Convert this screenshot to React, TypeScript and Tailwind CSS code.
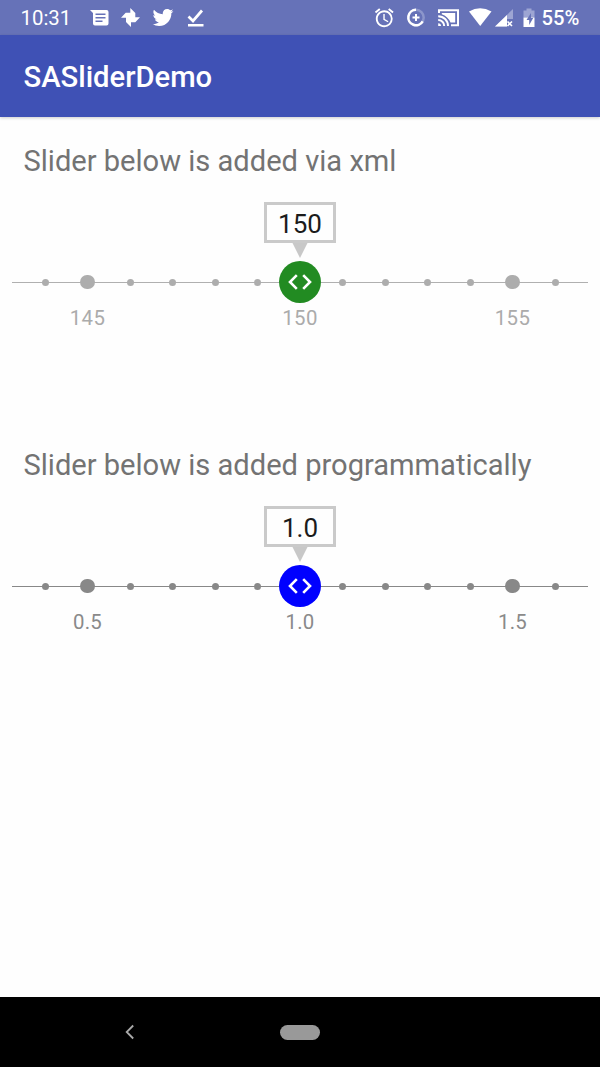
import React from 'react';
import { MdAlarm } from 'react-icons/md';
import { FaTwitter } from 'react-icons/fa';

type SliderProps = {
  title: string;
  value: string;
  labels: [string, string, string];
  knob: string;
  dot: string;
  line: string;
  text: string;
};

function Slider({ title, value, labels, knob, dot, line, text }: SliderProps) {
  return (
    <section className="flex h-[304px] flex-col items-center">
      <h2 className="h-[34px] w-full whitespace-nowrap pl-[23.5px] text-[29.080px] leading-[34px] text-[#737373]">{title}</h2>
      <div className="mt-[24px] flex h-[41px] w-[72px] items-center justify-center border-[3px] border-[#cacaca] pt-[3px] text-[26px] text-[#1b1b1b]">
        {value}
      </div>
      <svg className="h-[15px] w-[16px]" viewBox="0 0 16 15">
        <path d="M0.5 0h15L8 15z" fill="#c8c8c8" />
      </svg>
      <div className="relative mt-[2px] flex h-[44px] w-full items-center px-[12px]">
        <div className={`h-px w-full ${line}`} />
        <div className="absolute inset-0 flex items-center justify-center">
          {Array.from({ length: 13 }, (_, i) => (
            <div key={i} className="flex w-[42.5px] shrink-0 justify-center">
              {i === 6 ? (
                <div className={`flex size-[42.5px] shrink-0 items-center justify-center rounded-full ${knob}`}>
                  <svg className="h-[16px] w-[26px]" viewBox="0 0 26 16" fill="none" stroke="#fff" strokeWidth="2.6">
                    <path d="M9.8 1.2L3 8l6.8 6.8M16.2 1.200L23 8l-6.8 6.8" />
                  </svg>
                </div>
              ) : (
                <div className={`rounded-full ${dot} ${i === 1 || i === 11 ? 'size-[14.5px]' : 'size-[7px]'}`} />
              )}
            </div>
          ))}
        </div>
      </div>
      <div className={`mt-[2px] flex w-full justify-center text-[20.4px] leading-[25px] tracking-[0.3px] ${text}`}>
        {labels.map((l) => (
          <span key={l} className="w-[212.5px] shrink-0 text-center">{l}</span>
        ))}
      </div>
    </section>
  );
}

export default function App() {
  return (
    <div className="flex h-[1067px] w-[600px] flex-col overflow-hidden bg-[#fefefe] font-['Roboto',sans-serif]">
      <div className="flex h-[35px] shrink-0 items-center bg-[#6672b8] pt-[1px] text-[20.4px] font-medium text-white">
        <span className="w-[88px] pl-[20.5px] pt-[1px] font-normal">10:31</span>
        <svg className="h-[34px] w-[120px]" viewBox="88 1 120 34" fill="#fff">
          <path fillRule="evenodd" d="M90 10h16.500a2 2 0 0 1 2 2v11.500a2 2 0 0 1-2 2H95a2 2 0 0 1-2-2V13zM95.500 13.500v1.500h10v-1.500zM95.500 17v1.500h10V17zM95.500 20.500V22h7v-1.500z" />
          <path d="M130.300 8l5 5v4.500h-5zM140 17.300l-4.700 5h-5v-5zM131 27l-5-5v-4.500h5zM121 17.700l4.700-5h5v5z" />
          <FaTwitter x="152.500" y="7" size={21} />
          <path d="M188.500 16.500l4.500 4.500 9-10.500" fill="none" stroke="#fff" strokeWidth="2.7" />
          <path d="M188 24h15.500v2.500H188z" />
        </svg>
        <svg className="ml-[162px] h-[34px] w-[170px]" viewBox="370 1 170 34" fill="#fff">
          <MdAlarm x="373" y="6.500" size={22.500} />
          <circle cx="416" cy="17.500" r="7.700" fill="none" stroke="#8c96cb" strokeWidth="2.500" />
          <path d="M416 9.800A7.700 7.700 0 1 0 422.700 21.300" fill="none" stroke="#fff" strokeWidth="2.500" />
          <path d="M415 14h2v2.500h2.500v2H417V21h-2v-2.500h-2.500v-2h2.500z" />
          <g fill="none" stroke="#fff" strokeWidth="2">
            <path d="M439 13v-2.800h19v15h-7M438.200 16.200a9.800 9.800 0 0 1 9.800 9.800M438.200 20a6 6 0 0 1 6 6" />
          </g>
          <path d="M438.200 23.200a2.800 2.800 0 0 1 2.800 2.800h-2.800zM441.800 13h13.400v9.500h-4.700q-2.500-6-8.700-8.200z" />
          <path d="M469 11.500q11-6.500 22.500 0L480.200 26z" />
          <path d="M513 9v10h-6v7.500h-12z" fill="#9da5d3" />
          <path d="M507 15v11.500h-12z" />
          <path d="M507.500 21.500l4.500 4.500m0-4.500l-4.500 4.500" stroke="#fff" strokeWidth="1.600" />
          <path d="M523.500 10.500h3v-2h5v2h3v7h-11z" fill="#9da5d3" />
          <path d="M523.500 17.500h11v9.500h-11z" />
          <path d="M531 13l-4.500 7h2.700v5l4-7h-2.200z" fill="#6672b8" />
        </svg>
        <span className="ml-[1.500px] pt-[1px] text-[20.2px]">55%</span>
      </div>
      <header className="flex h-[82px] shrink-0 items-center bg-[#3f51b5] pl-[23.5px] pt-[4px] text-[29.2px] font-medium text-white shadow-[0_1px_3px_rgba(0,0,0,0.2)]">
        SASliderDemo
      </header>
      <main className="flex flex-1 flex-col pt-[27px]">
        <Slider title="Slider below is added via xml" value="150" labels={['145', '150', '155']} knob="bg-[#228b22]" dot="bg-[#adadad]" line="bg-[#b0b0b0]" text="text-[#ababab]" />
        <Slider title="Slider below is added programmatically" value="1.0" labels={['0.5', '1.0', '1.5']} knob="bg-[#0000ff]" dot="bg-[#888888]" line="bg-[#888888]" text="text-[#8a8a8a]" />
      </main>
      <nav className="flex h-[70px] shrink-0 items-center bg-black">
        <svg className="ml-[124px] h-[16px] w-[12px]" viewBox="0 0 12 16" fill="none" stroke="#aaa" strokeWidth="1.8">
          <path d="M9.200 1.500L2.700 8l6.500 6.500" />
        </svg>
        <div className="ml-[144px] h-[15px] w-[40px] rounded-full bg-[#999999]" />
      </nav>
    </div>
  );
}
